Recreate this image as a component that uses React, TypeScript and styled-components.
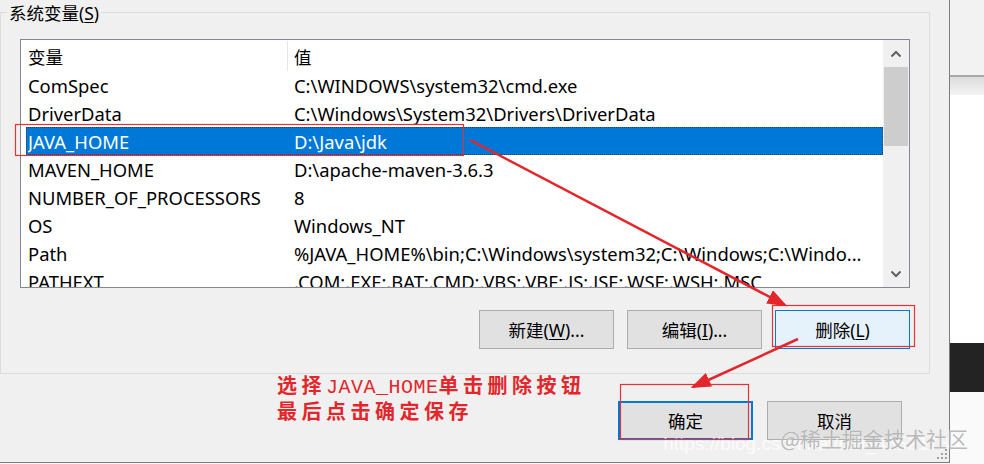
import React from "react";
import styled, { createGlobalStyle } from "styled-components";

const Global = createGlobalStyle`
  html, body { margin: 0; padding: 0; background: #fafafa; }
  body { font-family: "Noto Sans", "Noto Sans CJK SC", sans-serif; }
`;

const UI_FONT = `"Noto Sans", "Noto Sans CJK SC", sans-serif`;

const Page = styled.div`
  position: relative;
  display: flex;
  width: 984px;
  height: 464px;
  overflow: hidden;
  background: #fafafa;
`;

const Dialog = styled.div`
  flex: none;
  width: 949px;
  height: 462px;
  background: #f0f0f0;
  border-right: 1px solid #7c7c7c;
  border-bottom: 1px solid #7c7c7c;
  display: flex;
  flex-direction: column;
  font-family: ${UI_FONT};
  font-size: 17.5px;
  color: #000;
`;

const GroupBox = styled.div`
  position: relative;
  box-sizing: border-box;
  margin-top: 12px;
  width: 930px;
  height: 362px;
  border: 1px solid #dcdcdc;
  padding: 26px 19px 0 19px;
  display: flex;
  flex-direction: column;
`;

const Legend = styled.div`
  position: absolute;
  top: -12px;
  left: 6px;
  padding: 0 2px;
  background: #f0f0f0;
  line-height: 24px;
  font-size: 17.5px;
`;

const U = styled.span`
  text-decoration: underline;
  text-underline-offset: 2px;
`;

const ListBox = styled.div`
  box-sizing: border-box;
  width: 890px;
  height: 249px;
  border: 1px solid #828790;
  background: #fff;
  display: flex;
  overflow: hidden;
`;

const ListContent = styled.div`
  flex: 1;
  display: flex;
  flex-direction: column;
  overflow: hidden;
  font-size: 18.4px;
`;

const HeaderRow = styled.div`
  flex: none;
  height: 31px;
  display: grid;
  grid-template-columns: 266px 1fr;
  align-items: stretch;
  font-size: 17.5px;
`;

const HeaderCell = styled.div<{ $divider?: boolean }>`
  display: flex;
  align-items: center;
  padding-left: ${(p) => (p.$divider ? "6px" : "7px")};
  border-left: ${(p) => (p.$divider ? "1px solid #e5e5e5" : "none")};
  height: 30px;
  margin-top: 1px;
`;

const Row = styled.div<{ $selected?: boolean }>`
  flex: none;
  box-sizing: border-box;
  height: 28px;
  margin-left: 5px;
  padding: 2px 0 0 2px;
  display: grid;
  grid-template-columns: 266px 1fr;
  align-items: center;
  white-space: nowrap;
  background: ${(p) => (p.$selected ? "#0078d7" : "transparent")};
  color: ${(p) => (p.$selected ? "#fff" : "#000")};
  outline: ${(p) => (p.$selected ? "1px dotted #2a3f55" : "none")};
  outline-offset: -1px;
`;

const Cell = styled.div`
  overflow: hidden;
  white-space: nowrap;
  line-height: 26px;
`;

const ScrollBar = styled.div`
  flex: none;
  width: 26px;
  background: #f0f0f0;
  display: flex;
  flex-direction: column;
`;

const ScrollArrow = styled.div`
  flex: none;
  height: 27px;
  display: flex;
  align-items: center;
  justify-content: center;
`;

const ScrollTrack = styled.div`
  flex: 1;
  display: flex;
  flex-direction: column;
  padding: 0 1px;
`;

const Thumb = styled.div`
  height: 79px;
  background: #cdcdcd;
`;

const ButtonRow = styled.div`
  display: flex;
  justify-content: flex-end;
  gap: 13px;
  margin-top: 22px;
`;

const Button = styled.div<{ $variant?: "hover" | "default" }>`
  box-sizing: border-box;
  width: 135px;
  height: 39px;
  display: flex;
  align-items: center;
  justify-content: center;
  background: ${(p) => (p.$variant === "hover" ? "#e5f1fb" : "#e1e1e1")};
  border: ${(p) =>
    p.$variant === "hover"
      ? "1px solid #0078d7"
      : p.$variant === "default"
      ? "2px solid #0078d7"
      : "1px solid #adadad"};
  font-size: 17.5px;
  white-space: nowrap;
`;

const BottomRow = styled.div`
  display: flex;
  justify-content: flex-end;
  gap: 14px;
  margin-top: 27px;
  padding-right: 47px;
`;

const Side = styled.div`
  flex: 1;
  display: flex;
  flex-direction: column;
`;

const SideTop = styled.div`
  height: 75px;
  background: #f2f2f2;
  border-bottom: 2px solid #a9a9a9;
`;

const SideBar = styled.div`
  height: 18px;
  background: linear-gradient(#dcdcdc, #f4f4f4);
`;

const SideBlock = styled.div<{ $h: number; $bg: string }>`
  height: ${(p) => p.$h}px;
  background: ${(p) => p.$bg};
`;

const Overlay = styled.svg`
  position: absolute;
  left: 0;
  top: 0;
  pointer-events: none;
`;

const Note = styled.div`
  position: absolute;
  left: 277px;
  top: 373px;
  font-family: "Noto Sans CJK SC", serif;
  font-size: 20px;
  line-height: 23px;
  letter-spacing: 4.5px;
  color: #e3262b;
  font-weight: 600;
`;

const NoteLatin = styled.span`
  font-family: "Liberation Mono", monospace;
  font-weight: 400;
  letter-spacing: 0.5px;
`;

const Watermark = styled.div`
  position: absolute;
  right: 16px;
  top: 423px;
  font-family: "Noto Sans CJK SC", sans-serif;
  font-size: 21px;
  color: rgba(100, 100, 100, 0.45);
  text-shadow: 0 0 1px rgba(255, 255, 255, 0.9);
  white-space: nowrap;
`;

const WatermarkUrl = styled.div`
  position: absolute;
  right: 24px;
  top: 433px;
  font-family: "Liberation Sans", sans-serif;
  font-size: 19px;
  color: rgba(255, 255, 255, 0.75);
  white-space: nowrap;
`;

const Grip = styled.svg`
  position: absolute;
  left: 936px;
  top: 448px;
`;

const rows: [string, string][] = [
  ["ComSpec", "C:\\WINDOWS\\system32\\cmd.exe"],
  ["DriverData", "C:\\Windows\\System32\\Drivers\\DriverData"],
  ["JAVA_HOME", "D:\\Java\\jdk"],
  ["MAVEN_HOME", "D:\\apache-maven-3.6.3"],
  ["NUMBER_OF_PROCESSORS", "8"],
  ["OS", "Windows_NT"],
  ["Path", "%JAVA_HOME%\\bin;C:\\Windows\\system32;C:\\Windows;C:\\Windo..."],
  ["PATHEXT", ".COM;.EXE;.BAT;.CMD;.VBS;.VBE;.JS;.JSE;.WSF;.WSH;.MSC"],
];

const Chevron = ({ up }: { up?: boolean }) => (
  <svg width="12" height="8" viewBox="0 0 12 8">
    <path
      d={up ? "M1.5 6.5 L6 2 L10.5 6.5" : "M1.5 1.5 L6 6 L10.5 1.5"}
      fill="none"
      stroke="#606060"
      strokeWidth="2"
    />
  </svg>
);

export default function App() {
  return (
    <>
      <Global />
      <Page>
        <Dialog>
          <GroupBox>
            <Legend>
              系统变量(<U>S</U>)
            </Legend>
            <ListBox>
              <ListContent>
                <HeaderRow>
                  <HeaderCell>变量</HeaderCell>
                  <HeaderCell $divider>值</HeaderCell>
                </HeaderRow>
                {rows.map(([k, v]) => (
                  <Row key={k} $selected={k === "JAVA_HOME"}>
                    <Cell>{k}</Cell>
                    <Cell>{v}</Cell>
                  </Row>
                ))}
              </ListContent>
              <ScrollBar>
                <ScrollArrow>
                  <Chevron up />
                </ScrollArrow>
                <ScrollTrack>
                  <Thumb />
                </ScrollTrack>
                <ScrollArrow>
                  <Chevron />
                </ScrollArrow>
              </ScrollBar>
            </ListBox>
            <ButtonRow>
              <Button>
                新建(<U>W</U>)...
              </Button>
              <Button>
                编辑(<U>I</U>)...
              </Button>
              <Button $variant="hover">
                删除(<U>L</U>)
              </Button>
            </ButtonRow>
          </GroupBox>
          <BottomRow>
            <Button $variant="default">确定</Button>
            <Button>取消</Button>
          </BottomRow>
        </Dialog>
        <Side>
          <SideTop />
          <SideBar />
          <SideBlock $h={248} $bg="#ffffff" />
          <SideBlock $h={49} $bg="#232323" />
          <SideBlock $h={72} $bg="#fafafa" />
        </Side>

        <WatermarkUrl>https://blog.csdn.net/m0_46521785</WatermarkUrl>
        <Watermark>@稀土掘金技术社区</Watermark>
        <Grip width="12" height="12" viewBox="0 0 12 12">
          {[
            [9, 1],
            [9, 5],
            [5, 5],
            [9, 9],
            [5, 9],
            [1, 9],
          ].map(([x, y], i) => (
            <rect key={i} x={x} y={y} width="2" height="2" fill="#a0a0a0" />
          ))}
        </Grip>

        <Overlay width="984" height="464" viewBox="0 0 984 464">
          <defs>
            <marker
              id="ah"
              markerWidth="8"
              markerHeight="6"
              refX="7"
              refY="3"
              orient="auto"
              markerUnits="strokeWidth"
            >
              <path d="M0 0 L8 3 L0 6 Z" fill="#e3262b" />
            </marker>
          </defs>
          <rect x="15.5" y="124.5" width="448" height="31" fill="none" stroke="#e0343a" strokeWidth="1.2" />
          <rect x="772.5" y="305.5" width="142" height="41" fill="none" stroke="#e0343a" strokeWidth="1.2" />
          <rect x="620.5" y="384.5" width="128" height="55" fill="none" stroke="#e0343a" strokeWidth="1.2" />
          <line x1="470" y1="140" x2="785" y2="305" stroke="#e3262b" strokeWidth="2.5" markerEnd="url(#ah)" />
          <line x1="798" y1="339" x2="693" y2="387" stroke="#e3262b" strokeWidth="2.5" markerEnd="url(#ah)" />
        </Overlay>

        <Note>
          选择<NoteLatin>JAVA_HOME</NoteLatin>单击删除按钮
          <br />
          最后点击确定保存
        </Note>
      </Page>
    </>
  );
}
